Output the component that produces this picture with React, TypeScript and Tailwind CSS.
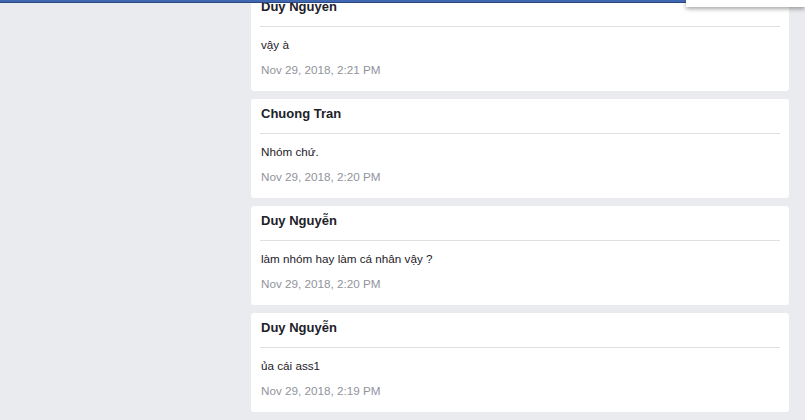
const messages = [
  { name: "Duy Nguyễn", text: "vậy à", time: "Nov 29, 2018, 2:21 PM" },
  { name: "Chuong Tran", text: "Nhóm chứ.", time: "Nov 29, 2018, 2:20 PM" },
  { name: "Duy Nguyễn", text: "làm nhóm hay làm cá nhân vậy ?", time: "Nov 29, 2018, 2:20 PM" },
  { name: "Duy Nguyễn", text: "ủa cái ass1", time: "Nov 29, 2018, 2:19 PM" },
];

function MessageCard({ name, text, time }: { name: string; text: string; time: string }) {
  return (
    <div className="mb-2 h-[99px] rounded-[3px] bg-white pt-[6px]">
      <div className="px-[10px] text-[13px] font-bold leading-[18px] text-[#1d2129]">{name}</div>
      <div className="mx-[9px] mt-[10px] h-px bg-[#dddfe2]" />
      <div className="mt-[10px] px-[10px] text-[11.7px] leading-[16px] text-[#1d2129]">{text}</div>
      <div className="mt-[9px] px-[10px] text-[11.7px] leading-[16px] text-[#90949c]">{time}</div>
    </div>
  );
}

export default function App() {
  return (
    <div className="relative h-[420px] w-[805px] overflow-hidden bg-[#e9ebee] font-['Liberation_Sans',Arial,sans-serif]">
      <div className="absolute left-0 right-0 top-0 z-10 h-[3px] border-b border-[#29487d] bg-[#4267b2]" />
      <div className="absolute right-0 top-0 z-20 h-[7px] w-[119px] bg-white shadow-[0_2px_4px_rgba(0,0,0,0.35)]" />
      <div className="ml-[251px] mt-[-8px] w-[538px]">
        {messages.map((m, i) => (
          <MessageCard key={i} {...m} />
        ))}
      </div>
    </div>
  );
}
